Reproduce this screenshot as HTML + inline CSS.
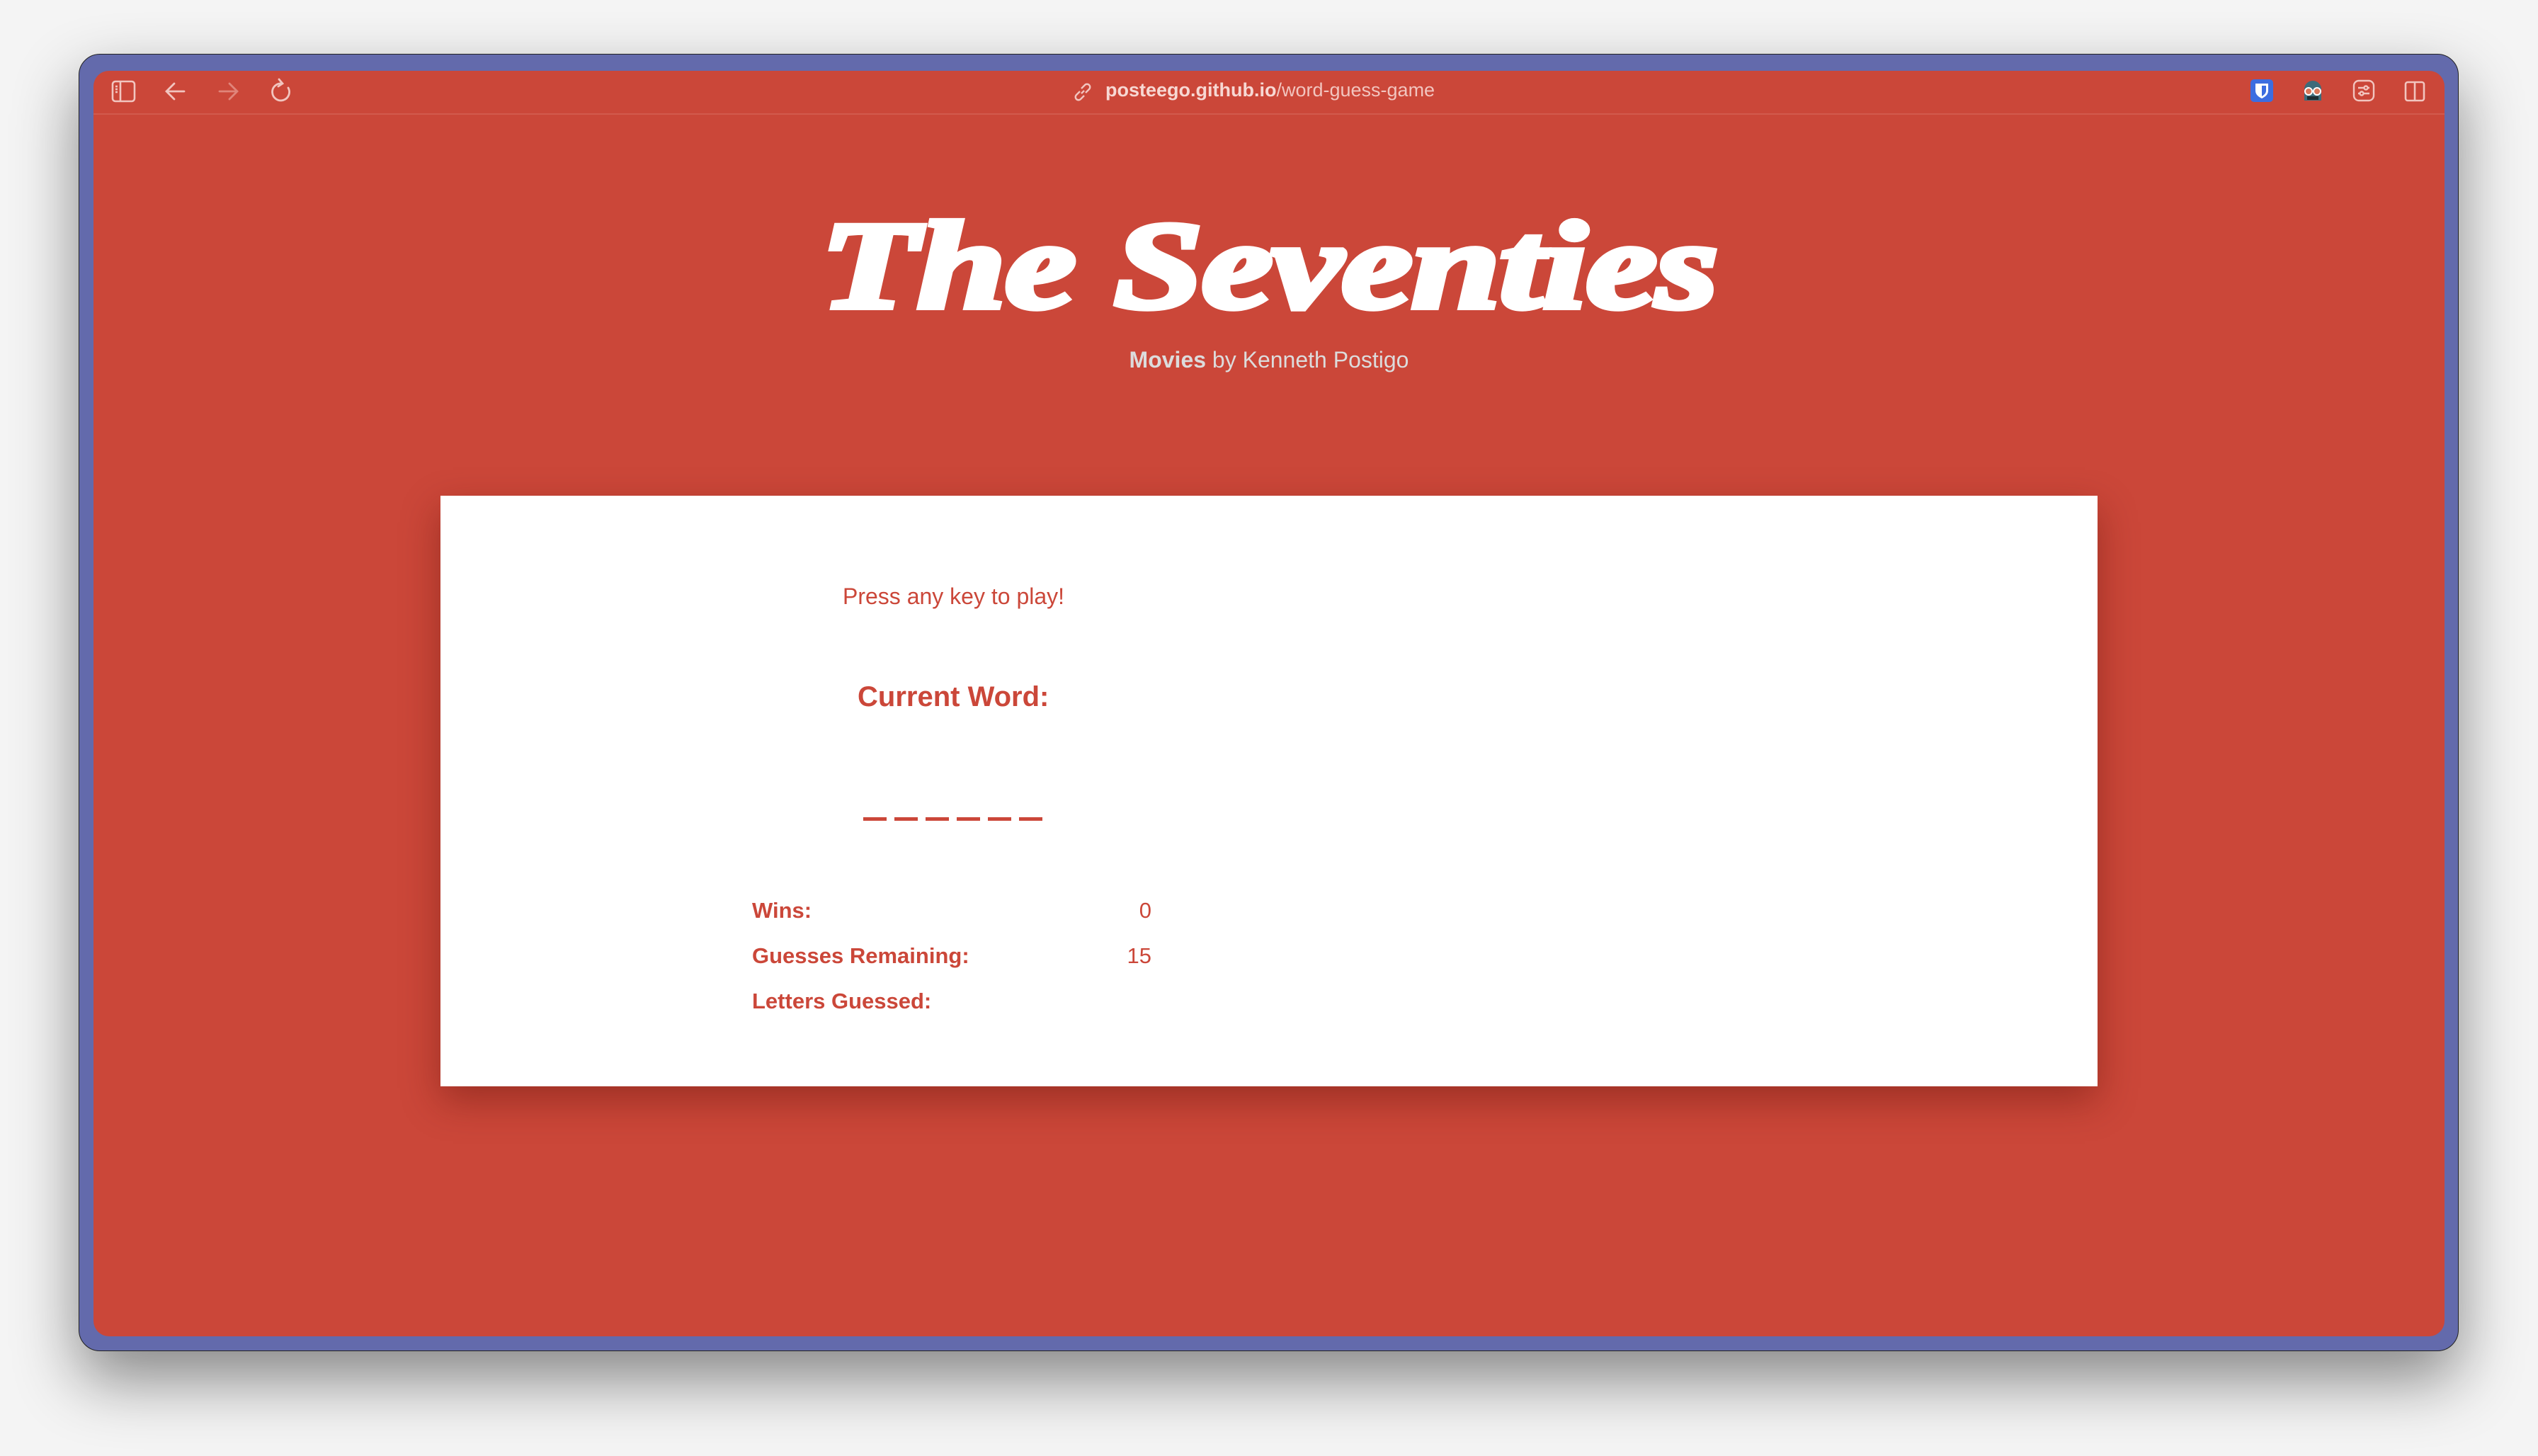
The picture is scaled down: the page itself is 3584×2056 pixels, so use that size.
<!DOCTYPE html>
<html><head><meta charset="utf-8"><style>
html,body{margin:0;padding:0;width:3584px;height:2056px;overflow:hidden;background:#f4f4f4;font-family:"Liberation Sans",sans-serif}
.win{position:absolute;left:111px;top:76px;width:3361px;height:1832px;border-radius:30px;background:#636aac;box-shadow:0 40px 90px rgba(0,0,0,.45);border:1px solid #222;box-sizing:border-box}
.inner{position:absolute;left:132px;top:100px;width:3320px;height:1787px;border-radius:22px;background:#cb4739;overflow:hidden}
.sep{position:absolute;left:0;right:0;top:60px;height:2px;background:#d25a4d}
.ic{position:absolute}
.url{position:absolute;left:1561px;top:112px;font-size:27px;color:#f2c5bf;white-space:nowrap}
.url b{font-weight:bold;color:#f7d8d3}
.title{position:absolute;left:0;width:3584px;top:288px;text-align:center;font-family:"Liberation Serif",serif;font-weight:bold;font-style:italic;font-size:176px;color:#fff;transform:scale(1.28,1);transform-origin:50% 0;letter-spacing:-1px;-webkit-text-stroke:8px #fff;line-height:1}
.sub{position:absolute;left:0;width:3584px;top:490px;text-align:center;font-size:32px;color:#dcdcdc}
.card{position:absolute;left:622px;top:700px;width:2340px;height:834px;background:#fff;box-shadow:0 20px 50px rgba(100,20,10,.45)}
.t{position:absolute;color:#cb4739;white-space:nowrap}
.dash{position:absolute;top:1154px;width:33px;height:5px;background:#cb4739}
</style></head><body>
<div class="win"></div>
<div class="inner"><div class="sep"></div></div>
<svg class="ic" style="left:157px;top:113px" width="35" height="32" viewBox="0 0 35 32" fill="none" stroke="#f2c5bf" stroke-width="2.6"><rect x="2" y="2" width="31" height="28" rx="4"/><line x1="13" y1="2" x2="13" y2="30"/><line x1="6" y1="9" x2="9" y2="9"/><line x1="6" y1="13" x2="9" y2="13"/><line x1="6" y1="17" x2="9" y2="17"/></svg>
<svg class="ic" style="left:233px;top:115px" width="30" height="28" viewBox="0 0 30 28" fill="none" stroke="#f2c5bf" stroke-width="2.8" stroke-linecap="round"><path d="M27 14H3M13 3L2 14l11 11"/></svg>
<svg class="ic" style="left:307px;top:115px" width="30" height="28" viewBox="0 0 30 28" fill="none" stroke="#e0857a" stroke-width="2.8" stroke-linecap="round"><path d="M3 14h24M17 3l11 11-11 11"/></svg>
<svg class="ic" style="left:381px;top:110px" width="30" height="36" viewBox="0 0 30 36" fill="none" stroke="#f2c5bf" stroke-width="2.8" stroke-linecap="round"><path d="M17 8A12 12 0 1 0 26 14"/><path d="M13 2l5 6-6 4"/></svg>
<svg class="ic" style="left:1515px;top:116px" width="28" height="28" viewBox="0 0 28 28" fill="none" stroke="#f2c5bf" stroke-width="2.4"><path d="M12 16l4-4"/><path d="M10 13l-5 5a4 4 0 0 0 6 6l5-5"/><path d="M18 15l5-5a4 4 0 0 0-6-6l-5 5"/></svg>
<div class="url"><b>posteego.github.io</b>/word-guess-game</div>
<svg class="ic" style="left:3178px;top:112px" width="32" height="32" viewBox="0 0 32 32"><rect width="32" height="32" rx="5" fill="#3c6de0"/><path d="M7 6h18v10c0 6-5 9-9 11-4-2-9-5-9-11z" fill="#fff"/><path d="M16 9h6v7c0 4-3 6-6 8z" fill="#3c6de0"/></svg>
<svg class="ic" style="left:3250px;top:112px" width="32" height="32" viewBox="0 0 32 32"><path d="M4 30V14a12 12 0 0 1 24 0v16z" fill="#3d6b7a"/><circle cx="10" cy="17" r="5" fill="#d9775a" stroke="#fff" stroke-width="2"/><circle cx="22" cy="17" r="5" fill="#d9775a" stroke="#fff" stroke-width="2"/><rect x="8" y="24" width="16" height="5" fill="#1e2d33"/></svg>
<svg class="ic" style="left:3322px;top:112px" width="32" height="32" viewBox="0 0 32 32" fill="none" stroke="#f2c5bf" stroke-width="2.4"><rect x="2" y="2" width="28" height="28" rx="7"/><path d="M8 12h16M8 20h16"/><circle cx="19" cy="12" r="2.5" fill="#cb4739"/><circle cx="13" cy="20" r="2.5" fill="#cb4739"/></svg>
<svg class="ic" style="left:3395px;top:114px" width="30" height="30" viewBox="0 0 30 30" fill="none" stroke="#f2c5bf" stroke-width="2.6"><rect x="2" y="2" width="26" height="26" rx="3"/><line x1="15" y1="2" x2="15" y2="28"/></svg>
<div class="title">The Seventies</div>
<div class="sub"><b>Movies</b> by Kenneth Postigo</div>
<div class="card"></div>
<div class="t" style="left:1190px;top:824px;font-size:32px">Press any key to play!</div>
<div class="t" style="left:1211px;top:962px;font-size:40px;font-weight:bold">Current Word:</div>
<div class="dash" style="left:1219px"></div><div class="dash" style="left:1263px"></div><div class="dash" style="left:1307px"></div><div class="dash" style="left:1351px"></div><div class="dash" style="left:1395px"></div><div class="dash" style="left:1439px"></div>
<div class="t" style="left:1062px;top:1268px;font-size:31px;font-weight:bold">Wins:</div>
<div class="t" style="left:1062px;top:1332px;font-size:31px;font-weight:bold">Guesses Remaining:</div>
<div class="t" style="left:1062px;top:1396px;font-size:31px;font-weight:bold">Letters Guessed:</div>
<div class="t" style="right:1958px;top:1268px;font-size:31px">0</div>
<div class="t" style="right:1958px;top:1332px;font-size:31px">15</div>
</body></html>
